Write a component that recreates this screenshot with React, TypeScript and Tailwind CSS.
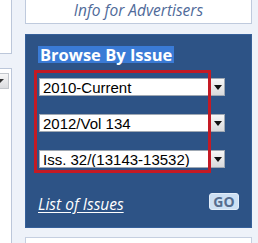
const selects = ['2010-Current', '2012/Vol 134', 'Iss. 32/(13143-13532)']

function DropArrow() {
  return (
    <div className="w-[14px] h-full shrink-0 flex items-center justify-center border-l border-[#b5b9bf] bg-gradient-to-b from-[#f7f7f7] to-[#d9dadc]">
      <svg width="8" height="5" viewBox="0 0 8 5">
        <path d="M0 0h8L4 5z" fill="#111" />
      </svg>
    </div>
  )
}

function SelectBox({ label }: { label: string }) {
  return (
    <div className="ml-px w-[186px] h-[18px] flex items-stretch bg-white border border-[#9fa8b3]">
      <div className="flex-1 pl-[3px] flex items-center text-[15px] leading-none text-black font-['Liberation_Sans',Arial,sans-serif] whitespace-nowrap overflow-hidden">
        {label}
      </div>
      <DropArrow />
    </div>
  )
}

export default function App() {
  return (
    <div className="relative w-[258px] h-[243px] overflow-hidden bg-[#eef2f9] flex font-['Open_Sans',sans-serif]">
      {/* left column, cut off */}
      <div className="w-[12px] shrink-0 flex flex-col">
        <div className="h-[54px] bg-white border-r border-b border-[#bcc7da]" />
        <div className="mt-[14px] flex-1 bg-white border-r border-t border-[#bcc7da] pt-[4px]">
          <div className="w-[9px] h-[16px] flex items-center border-r border-y border-[#c3c7cc] bg-gradient-to-b from-[#f7f7f7] to-[#dcdde0]">
            <svg width="4" height="5" viewBox="0 0 4 5">
              <path d="M0 0h4L0 4z" fill="#333" />
            </svg>
          </div>
        </div>
      </div>

      <div className="ml-[13px] w-[227px] shrink-0 flex flex-col">
        <div className="h-[24px] bg-white border-x border-b border-[#bfcadd] flex items-end justify-center pb-[5px]">
          <span className="text-[15.5px] leading-[15px] italic text-[#4f6a99]">Info for Advertisers</span>
        </div>

        <div className="mt-[10px] h-[194px] bg-[#2d5386] border border-[#36609a] pl-[12px] pr-[12px] pt-[11px] flex flex-col">
          <div className="flex">
            <span className="block bg-[#3a7bd6] text-white font-bold text-[16.5px] leading-[17px] px-[2px]">
              Browse By Issue
            </span>
          </div>
          <div className="mt-[15px] flex flex-col gap-[18px]">
            {selects.map((s) => (
              <SelectBox key={s} label={s} />
            ))}
          </div>
          <div className="mt-[25px] flex items-start justify-between">
            <a href="#" className="mt-[3px] text-[15.5px] leading-[17px] italic text-white underline underline-offset-2">
              List of Issues
            </a>
            <button className="w-[30px] h-[17px] rounded-[3px] bg-[#cde0f4] border border-[#e3eefa] text-[#566d8f] font-bold text-[14px] leading-[14px] flex items-center justify-center">
              GO
            </button>
          </div>
        </div>

        <div className="mt-[9px] flex-1 bg-white border-x border-t border-[#c5cfe0]" />
      </div>

      {/* red annotation frame */}
      <div className="absolute left-[34px] top-[70px] w-[177px] h-[103px] border-[3px] border-[#c41a24] pointer-events-none" />
    </div>
  )
}
